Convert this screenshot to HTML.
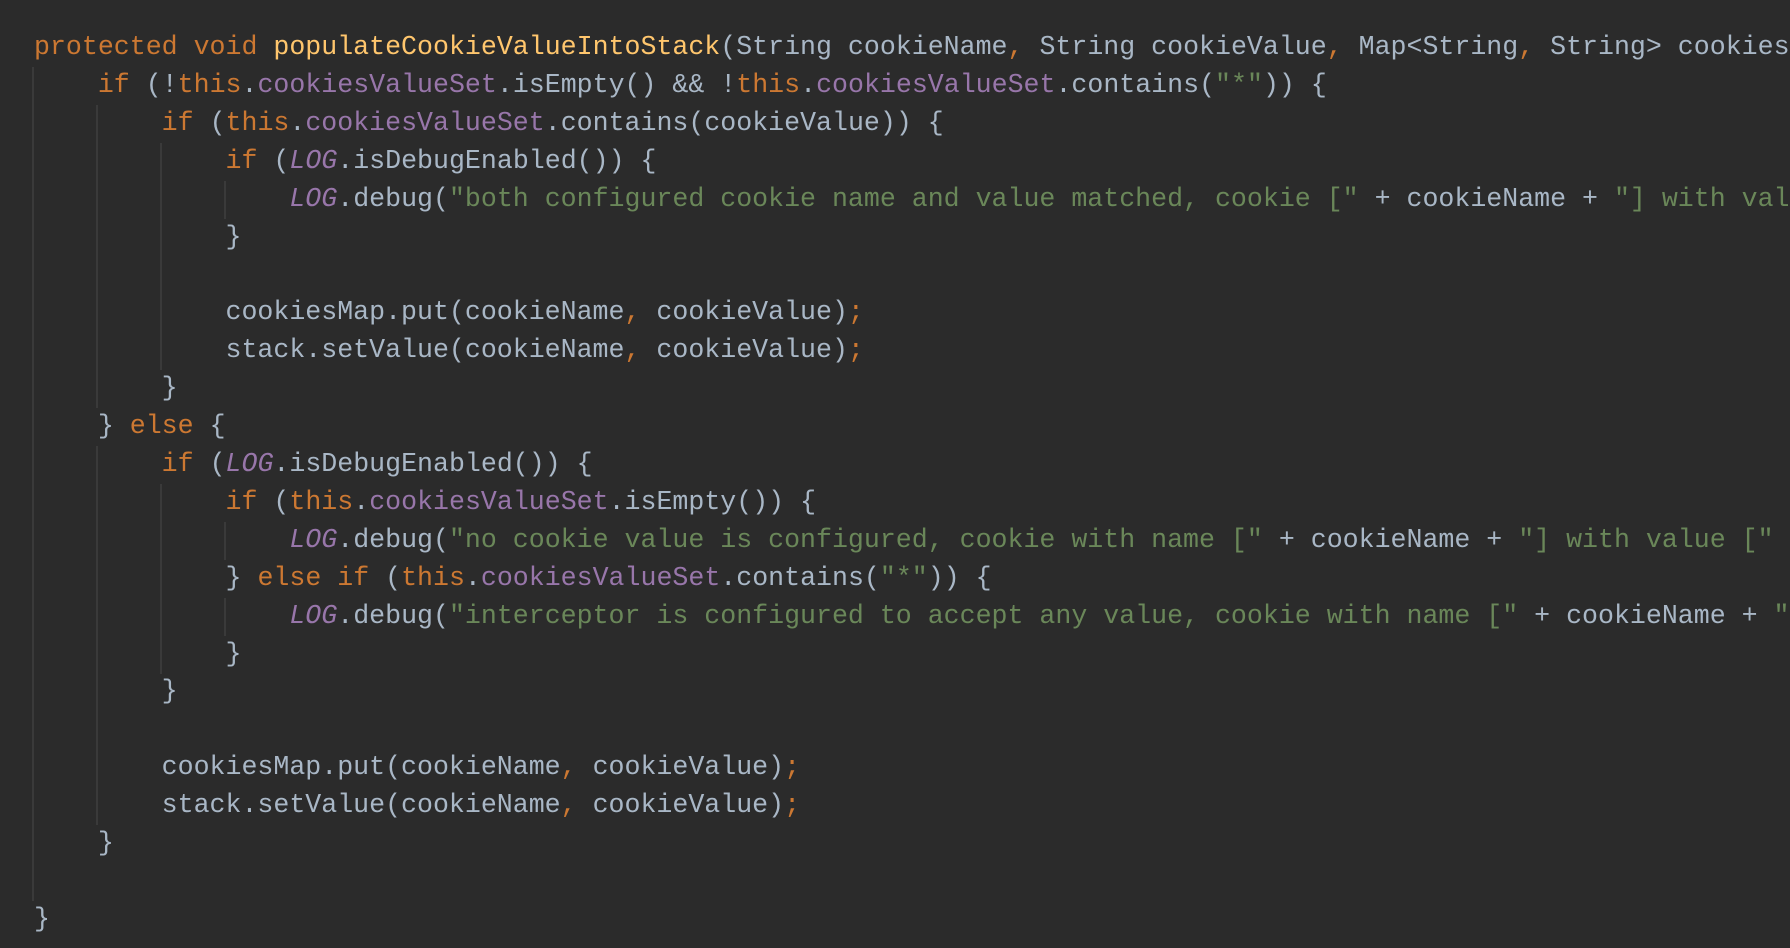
<!DOCTYPE html>
<html><head><meta charset="utf-8"><style>
html,body{margin:0;padding:0;background:#2b2b2b;}
body{width:1790px;height:948px;overflow:hidden;position:relative;}
#c{position:absolute;left:34px;top:29px;width:1756px;overflow:hidden;font-family:"Liberation Mono",monospace;font-size:26.6px;line-height:37.9px;color:#a9b7c6;white-space:pre;}
.k{color:#cc7832}.m{color:#ffc66d}.f{color:#9876aa}.s{color:#6a8759}.i{color:#9876aa;font-style:italic}
.g{position:absolute;width:2px;background:#3a3a3a;}
</style></head><body>
<div class="g" style="left:32px;top:67px;height:834px"></div>
<div class="g" style="left:96px;top:105px;height:303px"></div>
<div class="g" style="left:96px;top:446px;height:379px"></div>
<div class="g" style="left:160px;top:143px;height:227px"></div>
<div class="g" style="left:160px;top:484px;height:190px"></div>
<div class="g" style="left:224px;top:181px;height:38px"></div>
<div class="g" style="left:224px;top:522px;height:38px"></div>
<div class="g" style="left:224px;top:598px;height:38px"></div>
<div id="c"><span class="k">protected void </span><span class="m">populateCookieValueIntoStack</span>(String cookieName<span class="k">, </span>String cookieValue<span class="k">, </span>Map&lt;String<span class="k">, </span>String&gt; cookiesMap<span class="k">, </span>ValueStack stack) {
    <span class="k">if </span>(!<span class="k">this</span>.<span class="f">cookiesValueSet</span>.isEmpty() &amp;&amp; !<span class="k">this</span>.<span class="f">cookiesValueSet</span>.contains(<span class="s">"*"</span>)) {
        <span class="k">if </span>(<span class="k">this</span>.<span class="f">cookiesValueSet</span>.contains(cookieValue)) {
            <span class="k">if </span>(<span class="i">LOG</span>.isDebugEnabled()) {
                <span class="i">LOG</span>.debug(<span class="s">"both configured cookie name and value matched, cookie ["</span> + cookieName + <span class="s">"] with value ["</span> + cookieValue + <span class="s">"] will be injected"</span>)<span class="k">;</span>
            }

            cookiesMap.put(cookieName<span class="k">, </span>cookieValue)<span class="k">;</span>
            stack.setValue(cookieName<span class="k">, </span>cookieValue)<span class="k">;</span>
        }
    } <span class="k">else </span>{
        <span class="k">if </span>(<span class="i">LOG</span>.isDebugEnabled()) {
            <span class="k">if </span>(<span class="k">this</span>.<span class="f">cookiesValueSet</span>.isEmpty()) {
                <span class="i">LOG</span>.debug(<span class="s">"no cookie value is configured, cookie with name ["</span> + cookieName + <span class="s">"] with value ["</span> + cookieValue + <span class="s">"] will be injected"</span>)<span class="k">;</span>
            } <span class="k">else if </span>(<span class="k">this</span>.<span class="f">cookiesValueSet</span>.contains(<span class="s">"*"</span>)) {
                <span class="i">LOG</span>.debug(<span class="s">"interceptor is configured to accept any value, cookie with name ["</span> + cookieName + <span class="s">"] with value ["</span> + cookieValue + <span class="s">"] will be injected"</span>)<span class="k">;</span>
            }
        }

        cookiesMap.put(cookieName<span class="k">, </span>cookieValue)<span class="k">;</span>
        stack.setValue(cookieName<span class="k">, </span>cookieValue)<span class="k">;</span>
    }

}</div>
</body></html>
